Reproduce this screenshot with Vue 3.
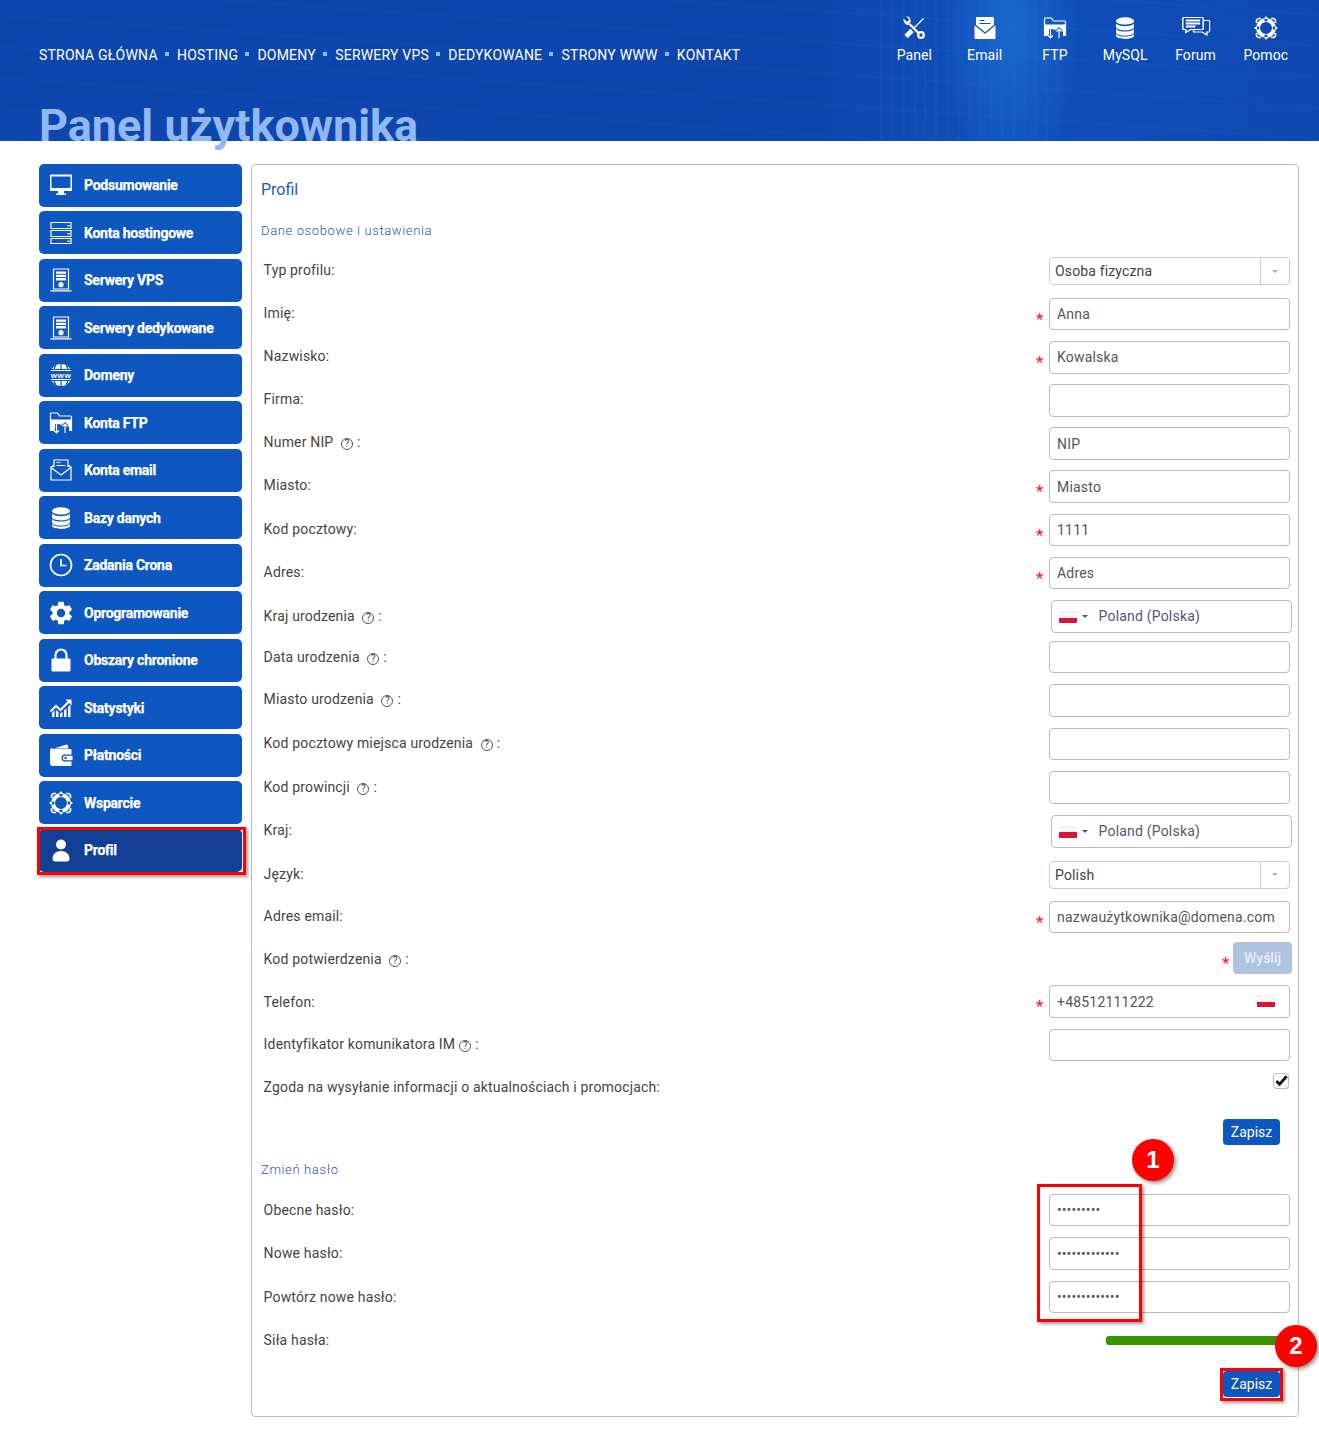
<script setup>
const ring = (cx, cy, r) => `M${cx - r} ${cy}a${r} ${r} 0 1 0 ${r * 2} 0a${r} ${r} 0 1 0 ${-r * 2} 0z`

const f = d => ({ d, c: 'fl' })
const s = d => ({ d, c: 'st' })
const b = d => ({ d, c: 'bg' })
const bs = d => ({ d, c: 'bs' })

const dbLayers = [
  f('M3 5c0-2 4-3.8 9-3.8S21 3 21 5s-4 3.6-9 3.6S3 7 3 5z'),
  f('M3 7.600c1.600 1.800 5 2.600 9 2.600s7.400-.8 9-2.600V11c0 2-4 3.400-9 3.400S3 13 3 11z'),
  f('M3 13c1.600 1.800 5 2.600 9 2.600s7.400-.8 9-2.600v3.200c0 2-4 3.400-9 3.400s-9-1.400-9-3.400z'),
  f('M3 18c1.600 1.800 5 2.600 9 2.600s7.400-.8 9-2.600v1.600c0 2-4 3.400-9 3.400s-9-1.400-9-3.400z')
]

const buoy = [
  { d: ring(12, 12, 8), c: 'st ringw' },
  { d: 'M2.500 7V5a2.500 2.500 0 0 1 2.500-2.500h2M17 2.500h2A2.500 2.500 0 0 1 21.500 5v2M21.500 17v2a2.500 2.500 0 0 1-2.500 2.500h-2M7 21.500H5A2.500 2.500 0 0 1 2.500 19v-2', c: 'st semi' },
  { d: 'M12 3v2.200M12 18.800V21M3 12h2.200M18.800 12H21', c: 'bs wide' },
  f(ring(12, 1.800, 1.300)),
  f(ring(12, 22.200, 1.300)),
  f(ring(1.800, 12, 1.300)),
  f(ring(22.200, 12, 1.300))
]

const ftp = [
  s('M1.500 20V3a1 1 0 0 1 1-1h6l2 3h11a1 1 0 0 1 1 1v14'),
  f('M1.500 8.500h21V20h-2.500v-4l-3.500-4-3 3-2-1.500-3-.5-3.500 7h-4z'),
  { d: 'M7.500 13v9M5 19.500L7.500 22l2.500-2.500M16 22v-9M13.500 15.500L16 13l2.500 2.500', c: 'bs halo' },
  s('M7.500 13v9M5 19.500L7.500 22l2.500-2.500M16 22v-9M13.500 15.500L16 13l2.500 2.500')
]

const tower = [
  s('M4.500 1h15v20h-15zM1.500 22.800h21'),
  f('M7 3.500h10v2.300H7zM7 6.800h10v2.300H7zM7 10.100h10v2.300H7z'),
  { d: ring(12, 16.700, 1.500), c: 'st mid' }
]

const icons = {
  tools: [
    s('M21.500 2.500L12 12'),
    { d: 'M10 14.500L4 20.500', c: 'st thick' },
    { d: 'M7.500 8L16.500 17', c: 'st mid' },
    f('M1.500 2.500l3 3 2-.5.500-2-2.800-2.500c3-.5 5 2 4.300 5.500L6.500 9C4 9.500 1 6 1.500 2.500z'),
    { d: ring(19, 19, 2.800), c: 'st mid' }
  ],
  mailFull: [
    f('M4 1h16a1 1 0 0 1 1 1v9l-9 6-9-6V2a1 1 0 0 1 1-1z'),
    { d: 'M6.500 4.500h5M6.500 7.500h11', c: 'bs' },
    f('M1.500 9v13a1 1 0 0 0 1 1h19a1 1 0 0 0 1-1V9l-10.500 8.500z'),
    { d: 'M1.500 8.500L12 17l10.500-8.500', c: 'bs' }
  ],
  mail: [
    s('M5 9V2h14v7M2 9.500V22h20V9.500L12 17zM2 9.500L5 7M22 9.500L19 7'),
    s('M7.500 4.500h4M7.500 7.500h9')
  ],
  ftp,
  db: dbLayers,
  forum: [
    s('M2 1.500h15a1 1 0 0 1 1 1v10a1 1 0 0 1-1 1H7.500L3.500 16.500v-3H2a1 1 0 0 1-1-1v-10a1 1 0 0 1 1-1z'),
    { d: 'M3.500 4.500h12M3.500 7.500h12M3.500 10.500h8', c: 'st mid' },
    s('M18.500 4.500H23a.8.8 0 0 1 .5.800V15a1 1 0 0 1-1 1H21v3l-4-3h-7v-2.500')
  ],
  buoy,
  monitor: [
    { d: 'M2 1.500h20a1 1 0 0 1 1 1V17a1 1 0 0 1-1 1H2a1 1 0 0 1-1-1V2.500a1 1 0 0 1 1-1zM2.500 3.500V15h19V3.500z', c: 'fl eo' },
    f('M9 18h6v2.500h-6zM7 20.500h10V22H7z')
  ],
  rack: [
    s('M2 1.500h20v6H2zM2 9.500h20v6H2zM2 17.500h20v5H2z'),
    f('M18.500 4h2v1.500h-2zM18.500 12h2v1.500h-2zM18.500 19.500h2V21h-2z')
  ],
  tower,
  globe: [
    f(ring(12, 12, 11)),
    bs('M2 6.500h20M2 17.500h20M12 1v5M12 18v5M7 2.500C5.500 4 5 5.500 5 7M17 2.500c1.500 1.500 2 3 2 4.500M5 17c0 1.500.5 3 2 4.500M19 17c0 1.500-.5 3-2 4.500'),
    b('M0 8h24v8H0z')
  ],
  clock: [
    { d: ring(12, 12, 10.500), c: 'st semi' },
    { d: 'M12 6v6.500h5.500', c: 'st semi' }
  ],
  gear: [
    { d: 'M19.140 12.940c.04-.3.06-.61.06-.94 0-.32-.02-.64-.07-.94l2.030-1.580c.18-.14.23-.41.12-.61l-1.920-3.320c-.12-.22-.37-.29-.59-.22l-2.390.96c-.5-.38-1.030-.7-1.620-.94l-.36-2.540c-.04-.24-.24-.41-.48-.41h-3.840c-.24 0-.43.17-.47.41l-.36 2.540c-.59.24-1.130.57-1.620.94l-2.390-.96c-.22-.08-.47 0-.59.22L2.740 8.870c-.12.21-.08.47.12.61l2.030 1.580c-.05.3-.09.63-.09.94s.02.64.07.94l-2.030 1.580c-.18.14-.23.41-.12.61l1.920 3.320c.12.22.37.29.59.22l2.390-.96c.5.38 1.030.7 1.620.94l.36 2.540c.05.24.24.41.48.41h3.840c.24 0 .44-.17.47-.41l.36-2.540c.59-.24 1.130-.56 1.620-.94l2.390.96c.22.08.47 0 .59-.22l1.920-3.320c.12-.22.07-.47-.12-.61l-2.010-1.580zM12 15.600c-1.980 0-3.600-1.620-3.600-3.600s1.620-3.600 3.600-3.600 3.600 1.620 3.600 3.600-1.620 3.600-3.600 3.600z', c: 'fl eo big' }
  ],
  lock: [
    f('M3.500 10.500h17a1 1 0 0 1 1 1V22a1.500 1.500 0 0 1-1.500 1.500H4A1.500 1.500 0 0 1 2.500 22V11.500a1 1 0 0 1 1-1z'),
    { d: 'M6.500 11V7a5.500 5.500 0 0 1 11 0v4', c: 'st mid' }
  ],
  chart: [
    { d: 'M1.500 15.500L7 10l4.500 4L20.500 5', c: 'st mid' },
    f('M16.500 3.500H22.500V9.500z'),
    f('M3 17l2.500-2.500V21H3zM7 14l2.500 2V21H7zM11 17.500l2.500-1.500V21H11zM15 14.500l2.500-2.500V21H15zM19 11l2.500-2.500V21H19z')
  ],
  wallet: [
    f('M4 6h17.500a1 1 0 0 1 1 1v4.500H16a3.500 3.500 0 0 0 0 7h6.500V22a1 1 0 0 1-1 1H4a3 3 0 0 1-3-3V8a3 3 0 0 1 3-3z'),
    f('M5 5.500L17.500 1.500a1 1 0 0 1 1.200.7L19.500 5.500z'),
    f('M16 12.800h7.500v4.400H16a2.200 2.200 0 0 1 0-4.400z'),
    b(ring(16.500, 15, 1.200))
  ],
  user: [
    f(ring(12, 6.500, 5)),
    f('M6 23.500c-1.500 0-2.500-1-2.500-2.500 0-5 3.500-8 8.500-8s8.500 3 8.500 8c0 1.500-1 2.500-2.500 2.500z')
  ]
}

const menu = ['STRONA GŁÓWNA', 'HOSTING', 'DOMENY', 'SERWERY VPS', 'DEDYKOWANE', 'STRONY WWW', 'KONTAKT']

const quick = [
  { label: 'Panel', icon: 'tools' },
  { label: 'Email', icon: 'mailFull' },
  { label: 'FTP', icon: 'ftp' },
  { label: 'MySQL', icon: 'db' },
  { label: 'Forum', icon: 'forum' },
  { label: 'Pomoc', icon: 'buoy' }
]

const sidebar = [
  { label: 'Podsumowanie', icon: 'monitor' },
  { label: 'Konta hostingowe', icon: 'rack' },
  { label: 'Serwery VPS', icon: 'tower' },
  { label: 'Serwery dedykowane', icon: 'tower' },
  { label: 'Domeny', icon: 'globe', text: 'www' },
  { label: 'Konta FTP', icon: 'ftp' },
  { label: 'Konta email', icon: 'mail' },
  { label: 'Bazy danych', icon: 'db' },
  { label: 'Zadania Crona', icon: 'clock' },
  { label: 'Oprogramowanie', icon: 'gear' },
  { label: 'Obszary chronione', icon: 'lock' },
  { label: 'Statystyki', icon: 'chart' },
  { label: 'Płatności', icon: 'wallet' },
  { label: 'Wsparcie', icon: 'buoy' },
  { label: 'Profil', icon: 'user', active: true }
]

const rows = [
  { label: 'Imię', type: 'input', value: 'Anna', req: true },
  { label: 'Nazwisko', type: 'input', value: 'Kowalska', req: true },
  { label: 'Firma', type: 'input', value: '' },
  { label: 'Numer NIP', type: 'input', value: 'NIP', help: true },
  { label: 'Miasto', type: 'input', value: 'Miasto', req: true },
  { label: 'Kod pocztowy', type: 'input', value: '1111', req: true },
  { label: 'Adres', type: 'input', value: 'Adres', req: true },
  { label: 'Kraj urodzenia', type: 'country', value: 'Poland (Polska)', help: true, size: 'short shifted' },
  { label: 'Data urodzenia', type: 'input', value: '', help: true, size: 'wide shifted' },
  { label: 'Miasto urodzenia', type: 'input', value: '', help: true, size: 'wide' },
  { label: 'Kod pocztowy miejsca urodzenia', type: 'input', value: '', help: true, size: 'wide' },
  { label: 'Kod prowincji', type: 'input', value: '', help: true, size: 'wide shifted' },
  { label: 'Kraj', type: 'country', value: 'Poland (Polska)', size: 'tall' },
  { label: 'Język', type: 'select', value: 'Polish', size: 'sel' },
  { label: 'Adres email', type: 'input', value: 'nazwaużytkownika@domena.com', req: true, size: 'short' },
  { label: 'Kod potwierdzenia', type: 'send', req: true, help: true, size: 'low' },
  { label: 'Telefon', type: 'phone', value: '+48512111222', req: true, size: 'lower' },
  { label: 'Identyfikator komunikatora IM', type: 'input', value: '', help: true, tight: true, size: 'im' },
  { label: 'Zgoda na wysyłanie informacji o aktualnościach i promocjach', type: 'check', size: 'consent' }
]

const passwords = [
  { label: 'Obecne hasło', value: '123456789' },
  { label: 'Nowe hasło', value: '1234567890123' },
  { label: 'Powtórz nowe hasło', value: '1234567890123' }
]
</script>

<template>
  <div class="page">
    <header class="top">
      <div class="top-row">
        <nav class="menu">
          <template v-for="(item, i) in menu" :key="item">
            <i v-if="i" class="dot"></i>
            <a class="menu-link">{{ item }}</a>
          </template>
        </nav>
        <div class="quick">
          <a v-for="q in quick" :key="q.label" class="quick-item">
            <svg class="ico" :class="'i-' + q.icon" viewBox="0 0 24 24">
              <path v-for="(p, i) in icons[q.icon]" :key="i" :d="p.d" :class="p.c" />
            </svg>
            <span>{{ q.label }}</span>
          </a>
        </div>
      </div>
      <h1 class="title">Panel użytkownika</h1>
    </header>

    <main class="main">
      <aside class="side">
        <a v-for="item in sidebar" :key="item.label" class="side-item" :class="{ active: item.active }">
          <svg class="ico" viewBox="0 0 24 24">
            <path v-for="(p, i) in icons[item.icon]" :key="i" :d="p.d" :class="p.c" />
            <text v-if="item.text" x="12" y="14.700" class="ico-text">{{ item.text }}</text>
          </svg>
          <span>{{ item.label }}</span>
        </a>
      </aside>

      <section class="panel">
        <h2 class="panel-title">Profil</h2>
        <h3 class="section first">Dane osobowe i ustawienia</h3>

        <div class="row sel top-sel">
          <label class="lbl">Typ profilu:</label>
          <div class="ctl">
            <div class="select"><span>Osoba fizyczna</span><b class="select-arrow"><i></i></b></div>
          </div>
        </div>

        <div v-for="r in rows" :key="r.label" class="row" :class="r.size">
          <label class="lbl">
            {{ r.label }}<i v-if="r.help" class="help" :class="{ tight: r.tight }">?</i><span v-if="r.help" class="colon">:</span><template v-else>:</template>
          </label>
          <div class="ctl">
            <span v-if="r.req" class="star" :class="{ near: r.type === 'send' }">*</span>
            <input v-if="r.type === 'input'" class="field" type="text" :value="r.value" readonly />
            <div v-else-if="r.type === 'country'" class="field country">
              <i class="flag"></i><i class="caret"></i><span>{{ r.value }}</span>
            </div>
            <div v-else-if="r.type === 'select'" class="select">
              <span>{{ r.value }}</span><b class="select-arrow"><i></i></b>
            </div>
            <button v-else-if="r.type === 'send'" class="send" type="button">Wyślij</button>
            <div v-else-if="r.type === 'phone'" class="field phone">
              <span>{{ r.value }}</span><i class="flag"></i>
            </div>
            <span v-else-if="r.type === 'check'" class="check">
              <svg viewBox="0 0 16 16"><path d="M2.500 8.500l3.500 3.500 7.500-8.500" /></svg>
            </span>
          </div>
        </div>

        <div class="actions first-save">
          <button class="save" type="button">Zapisz</button>
        </div>

        <h3 class="section second">Zmień hasło</h3>

        <div v-for="p in passwords" :key="p.label" class="row wide shifted">
          <label class="lbl">{{ p.label }}:</label>
          <div class="ctl">
            <input class="field pass" type="password" :value="p.value" readonly />
          </div>
        </div>

        <div class="row strength shifted">
          <label class="lbl">Siła hasła:</label>
          <div class="ctl"><div class="bar"></div></div>
        </div>

        <div class="actions">
          <button class="save" type="button">Zapisz</button>
        </div>
      </section>
    </main>

    <i class="mark mark-side"></i>
    <i class="mark mark-pass"></i>
    <i class="mark mark-save"></i>
    <b class="badge badge-one">1</b>
    <b class="badge badge-two">2</b>
  </div>
</template>

<style>
html,
body {
  margin: 0;
  background: #fff;
}
</style>

<style scoped>
.page {
  position: relative;
  width: 1319px;
  font-family: Roboto, "Liberation Sans", sans-serif;
  font-size: 14px;
  color: #444;
}

.top {
  height: 141px;
  box-sizing: border-box;
  padding-left: 39px;
  background:
    radial-gradient(ellipse 70px 150px at 1010px 30px, rgba(35, 130, 225, 0.5), transparent),
    repeating-linear-gradient(90deg, rgba(255, 255, 255, 0.018) 0 3px, transparent 3px 11px) 880px 0 / 180px 141px no-repeat,
    repeating-linear-gradient(4deg, rgba(255, 255, 255, 0.015) 0 2px, transparent 2px 31px),
    linear-gradient(90deg, #0e46ad 0, #0e46ad 62%, #0f50bb 76%, #0e48b0 100%);
}

.top-row {
  display: flex;
  justify-content: space-between;
  height: 103px;
  padding-right: 18px;
}

.menu {
  display: flex;
  align-items: center;
  height: 18px;
  margin-top: 46px;
  color: #fff;
  letter-spacing: 0.21px;
  line-height: 18px;
}

.dot {
  width: 4px;
  height: 4px;
  margin: -3px 8.300px 0 7px;
  background: #8fbcf2;
}

.quick {
  display: flex;
  padding-top: 16px;
}

.quick-item {
  display: flex;
  flex-direction: column;
  align-items: center;
  width: 70.3px;
  color: #fff;
  letter-spacing: 0.1px;
  line-height: 18px;
}

.quick-item .ico {
  margin-bottom: 6px;
  --ic-bg: #0f50bb;
}

.i-forum {
  transform: scaleX(1.2);
}

.title {
  margin: 0;
  color: #8fb9f0;
  font-size: 45px;
  font-weight: 700;
  line-height: 45px;
  white-space: nowrap;
}

.ico {
  flex: none;
  width: 24px;
  height: 24px;
  --ic-bg: #0e56c0;
}

.fl {
  fill: #fff;
}

.eo {
  fill-rule: evenodd;
}

.st {
  fill: none;
  stroke: #fff;
  stroke-width: 1.2;
}

.semi {
  stroke-width: 1.7;
}

.mid {
  stroke-width: 2.2;
}

.thick {
  stroke-width: 4.6;
}

.ringw {
  stroke-width: 4;
}

.bg {
  fill: var(--ic-bg);
}

.bs {
  fill: none;
  stroke: var(--ic-bg);
  stroke-width: 1.2;
}

.bs.wide {
  stroke-width: 3;
}

.bs.halo {
  stroke-width: 3;
}

.big {
  transform: scale(1.17);
  transform-origin: 12px 12px;
}

.ico-text {
  fill: #fff;
  font-family: "Liberation Sans", sans-serif;
  font-size: 8px;
  font-weight: 700;
  letter-spacing: 0.6px;
  text-anchor: middle;
}

.main {
  display: flex;
  align-items: flex-start;
  gap: 9px;
  padding: 23px 20px 17px 39px;
}

.side {
  flex: none;
  display: flex;
  flex-direction: column;
  gap: 4.5px;
  width: 203px;
  margin-top: -0.2px;
}

.side-item {
  display: flex;
  align-items: center;
  gap: 11px;
  box-sizing: border-box;
  height: 43px;
  padding-left: 10px;
  border-radius: 5px;
  background: #0e56c0;
  color: #fff;
  font-size: 14px;
  font-weight: 700;
  letter-spacing: -0.25px;
  -webkit-text-stroke: 0.25px #fff;
}

.side-item.active {
  background: #123f93;
  --ic-bg: #123f93;
}

.panel {
  flex: 1;
  box-sizing: border-box;
  height: 1253px;
  padding: 0 8px 0 9px;
  border: 1px solid #bbb;
  border-radius: 4px;
}

.panel-title {
  margin: 15px 0 0;
  color: #2459c4;
  font-size: 16px;
  font-weight: 400;
  line-height: 20px;
}

.section {
  margin: 0;
  color: #1f55c4;
  font-size: 13px;
  font-weight: 300;
  letter-spacing: 0.63px;
  line-height: 16px;
}

.section.first {
  margin: 23px 0 18px;
}

.section.second {
  margin: 0 0 16px;
}

.row {
  display: flex;
  justify-content: space-between;
  height: 43.15px;
}

.row.sel {
  height: 40px;
}

.row.top-sel {
  height: 40.9px;
}

.row.short {
  height: 41px;
}

.row.wide {
  height: 43.5px;
}

.row.tall {
  height: 46px;
}

.row.low {
  height: 43px;
}

.row.lower,
.row.im {
  height: 44px;
}

.row.consent {
  height: 46px;
}

.row.sel .lbl {
  padding-top: 5px;
}

.row.shifted .lbl {
  padding-top: 8px;
}

.row.low .lbl,
.row.lower .lbl {
  padding-top: 9px;
}

.row.consent .lbl {
  padding-top: 6px;
}

.lbl {
  padding: 7px 0 0 2.6px;
  color: #444;
  letter-spacing: 0.17px;
  line-height: 16px;
}

.help {
  display: inline-block;
  box-sizing: border-box;
  width: 12px;
  height: 12px;
  margin: 0 0 0 7.500px;
  border: 1px solid #555;
  border-radius: 50%;
  font-size: 10px;
  font-style: normal;
  letter-spacing: 0;
  line-height: 10px;
  text-align: center;
  vertical-align: 0;
}

.help.tight {
  margin-left: 4px;
}

.colon {
  margin-left: 4px;
}

.ctl {
  display: flex;
  align-items: flex-start;
  justify-content: flex-end;
  position: relative;
  width: 260px;
}

.star {
  width: 13px;
  margin-top: 11px;
  color: #f11;
  font-size: 17px;
  line-height: 20px;
}

.star.near {
  width: 11px;
}

.field {
  box-sizing: border-box;
  width: 241px;
  height: 32.5px;
  margin: 0;
  padding: 0 7px;
  border: 1px solid #bbb;
  border-radius: 4px;
  outline: 0;
  background: #fff;
  color: #555;
  font-family: inherit;
  font-size: 14px;
  letter-spacing: 0.2px;
  line-height: 30px;
}

.field.pass {
  letter-spacing: 0.08px;
}

.country {
  display: flex;
  align-items: center;
  height: 33px;
  margin-right: -2px;
  color: #557;
}

.country .flag {
  margin: 1px 4.500px 0 0;
}

.caret {
  width: 0;
  height: 0;
  margin-right: 11px;
  border: 3px solid transparent;
  border-top: 3px solid #555;
  border-bottom: 0;
}

.phone {
  display: flex;
  align-items: center;
  justify-content: space-between;
  height: 33px;
  padding-right: 14px;
}

.phone span {
  padding-top: 1px;
}

.flag {
  flex: none;
  box-sizing: border-box;
  width: 18px;
  height: 12px;
  border-top: 1px solid #eee;
  background: linear-gradient(#f7f7f7 50%, #dc143c 50%);
}

.select {
  display: flex;
  align-items: center;
  box-sizing: border-box;
  width: 241px;
  height: 28px;
  padding-left: 5px;
  border: 1px solid #ccc;
  border-radius: 4px;
  color: #444;
  letter-spacing: 0.15px;
}

.select span {
  flex: 1;
}

.select-arrow {
  display: flex;
  align-items: center;
  justify-content: center;
  width: 28px;
  height: 100%;
  border-left: 1px solid #ccc;
}

.select-arrow i {
  width: 0;
  height: 0;
  border: 3.5px solid transparent;
  border-top: 3.5px solid #aaa;
  border-bottom: 0;
}

.send {
  width: 59px;
  height: 32px;
  margin-right: -2px;
  padding: 0;
  border: 0;
  border-radius: 4px;
  background: #afc3df;
  color: #e8eef7;
  font-family: inherit;
  font-size: 14px;
  font-weight: 500;
}

.check {
  display: flex;
  align-items: center;
  justify-content: center;
  box-sizing: border-box;
  width: 16px;
  height: 16px;
  margin-right: 1px;
  border: 1px solid #bbb;
  border-radius: 3px;
}

.check svg {
  flex: none;
  width: 15px;
  height: 15px;
  overflow: visible;
}

.check path {
  fill: none;
  stroke: #111;
  stroke-width: 3;
}

.actions {
  display: flex;
  justify-content: flex-end;
  padding-right: 10px;
}

.first-save {
  height: 43px;
}

.save {
  width: 57px;
  height: 26px;
  padding: 0;
  border: 0;
  border-radius: 4px;
  background: #0e56c0;
  color: #fff;
  font-family: inherit;
  font-size: 14px;
}

.row.strength {
  height: 46.5px;
}

.bar {
  position: absolute;
  top: 11.5px;
  right: 5px;
  width: 179px;
  height: 9px;
  border-radius: 3px;
  background: #3a9400;
}

.mark {
  position: absolute;
  box-sizing: border-box;
  border: 3px solid #f00;
  box-shadow: 2px 2px 3px rgba(0, 0, 0, 0.4);
}

.mark-side {
  left: 37px;
  top: 827px;
  width: 209px;
  height: 48px;
}

.mark-pass {
  left: 1037px;
  top: 1184px;
  width: 105px;
  height: 138px;
}

.mark-save {
  left: 1220px;
  top: 1368px;
  width: 63px;
  height: 33px;
}

.badge {
  position: absolute;
  width: 42px;
  height: 42px;
  border-radius: 50%;
  background: #f00;
  box-shadow: 2px 2px 4px rgba(0, 0, 0, 0.45);
  color: #fff;
  font-family: "Liberation Sans", sans-serif;
  font-size: 24px;
  font-weight: 700;
  line-height: 42px;
  text-align: center;
}

.badge-one {
  left: 1132px;
  top: 1139px;
}

.badge-two {
  left: 1275px;
  top: 1325px;
}
</style>
